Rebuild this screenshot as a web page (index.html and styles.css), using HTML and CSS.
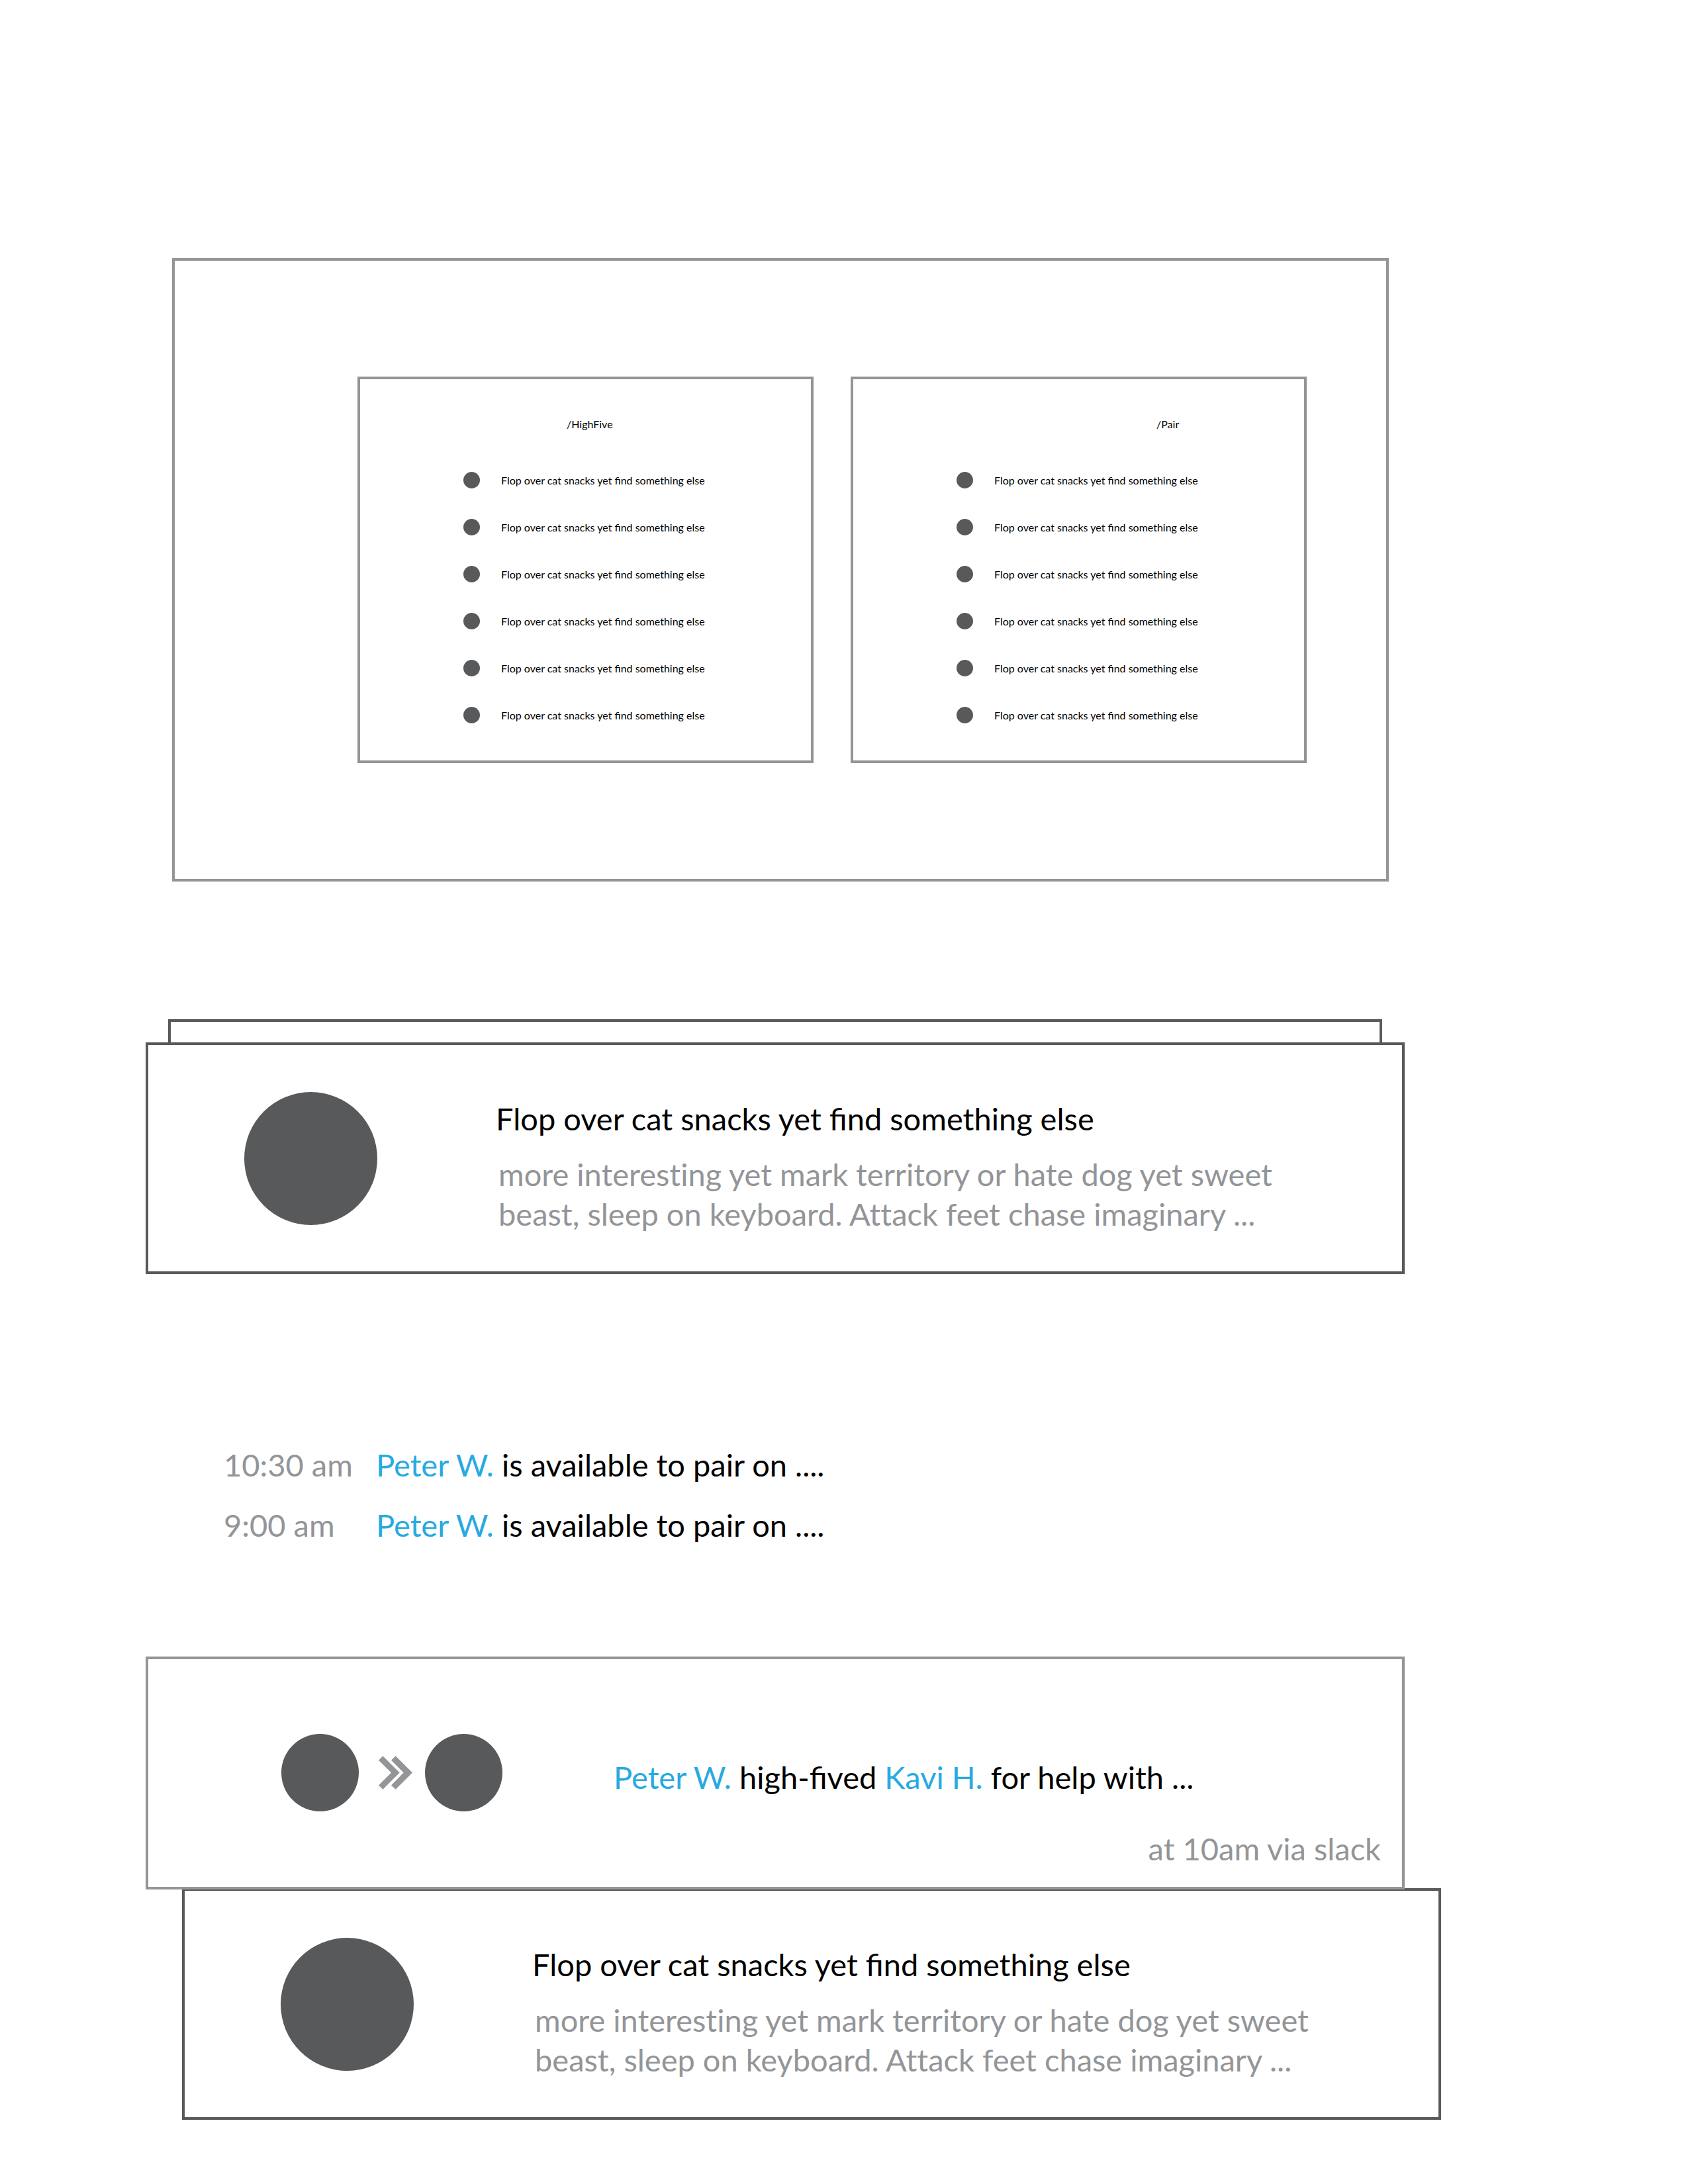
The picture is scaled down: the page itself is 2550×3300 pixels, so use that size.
FILE: index.html
```html
<!DOCTYPE html>
<html lang="en">
<head>
<meta charset="utf-8">
<title>Team activity</title>
<link rel="stylesheet" href="styles.css">
</head>
<body>
<main class="page">
  <section class="overview">
    <article class="panel">
      <h2 class="panel-title">/HighFive</h2>
      <ul class="panel-list">
        <li><span class="dot"></span>Flop over cat snacks yet find something else</li>
        <li><span class="dot"></span>Flop over cat snacks yet find something else</li>
        <li><span class="dot"></span>Flop over cat snacks yet find something else</li>
        <li><span class="dot"></span>Flop over cat snacks yet find something else</li>
        <li><span class="dot"></span>Flop over cat snacks yet find something else</li>
        <li><span class="dot"></span>Flop over cat snacks yet find something else</li>
      </ul>
    </article>
    <article class="panel">
      <h2 class="panel-title panel-title-pair">/Pair</h2>
      <ul class="panel-list">
        <li><span class="dot"></span>Flop over cat snacks yet find something else</li>
        <li><span class="dot"></span>Flop over cat snacks yet find something else</li>
        <li><span class="dot"></span>Flop over cat snacks yet find something else</li>
        <li><span class="dot"></span>Flop over cat snacks yet find something else</li>
        <li><span class="dot"></span>Flop over cat snacks yet find something else</li>
        <li><span class="dot"></span>Flop over cat snacks yet find something else</li>
      </ul>
    </article>
  </section>

  <section class="stack">
    <div class="stack-edge"></div>
    <article class="card">
      <span class="avatar"></span>
      <div class="card-text">
        <h2 class="card-title">Flop over cat snacks yet find something else</h2>
        <p class="card-excerpt">more interesting yet mark territory or hate dog yet sweet beast, sleep on keyboard. Attack feet chase imaginary ...</p>
      </div>
    </article>
  </section>

  <ul class="feed">
    <li><time class="muted">10:30 am</time><span><a href="#peter">Peter W.</a> is available to pair on ....</span></li>
    <li><time class="muted">9:00 am</time><span><a href="#peter">Peter W.</a> is available to pair on ....</span></li>
  </ul>

  <article class="highfive">
    <div class="highfive-row">
      <span class="avatar avatar-small"></span>
      <svg class="chevrons" viewBox="95 100 153 152" aria-hidden="true">
        <polygon points="114,100 190,176 114,252 95,233 152,176 95,120"/>
        <polygon points="172,100 248,176 172,252 152,233 208,176 152,120"/>
      </svg>
      <span class="avatar avatar-small"></span>
      <p class="highfive-text"><a href="#peter">Peter W.</a> high-fived <a href="#kavi">Kavi H.</a> for help with ...</p>
    </div>
    <p class="highfive-meta muted">at 10am via slack</p>
  </article>

  <article class="card card-offset">
    <span class="avatar"></span>
    <div class="card-text">
      <h2 class="card-title">Flop over cat snacks yet find something else</h2>
      <p class="card-excerpt">more interesting yet mark territory or hate dog yet sweet beast, sleep on keyboard. Attack feet chase imaginary ...</p>
    </div>
  </article>
</main>
</body>
</html>
```
FILE: styles.css
```css
* { box-sizing: border-box; }

body {
  margin: 0;
  background: #fff;
  color: #000;
  font-family: Lato, "Open Sans", sans-serif;
  font-size: 47px;
  line-height: 60px;
}

h2, p, ul { margin: 0; padding: 0; font-size: inherit; font-weight: 400; }
ul { list-style: none; }
a { color: #27aae1; text-decoration: none; }
.muted { color: #939598; }

.page { padding: 390px 0 96px; }

/* Overview with two command panels */
.overview {
  display: grid;
  grid-template-columns: 1fr 1fr;
  gap: 56px;
  margin: 0 452px 0 260px;
  padding: 175px 120px 175px 276px;
  border: 4px solid #939598;
}
.panel {
  padding: 58px 0 56px 156px;
  border: 4px solid #939598;
  font-size: 16px;
  line-height: 20px;
}
.panel-title { margin-bottom: 62px; padding-left: 156px; }
.panel-title-pair { padding-left: 302px; }
.panel-list { display: grid; gap: 46px; }
.panel-list li { display: flex; align-items: center; gap: 32px; height: 25px; }
.dot { flex: none; width: 25px; height: 25px; border-radius: 50%; background: #58595b; }

/* Message cards */
.stack { margin: 208px 428px 0 220px; }
.stack-edge {
  height: 35px;
  margin: 0 34px;
  border: 4px solid #58595b;
  border-bottom: 0;
}
.card {
  display: flex;
  align-items: flex-start;
  gap: 179px;
  padding: 71px 120px 57px 145px;
  border: 4px solid #58595b;
}
.avatar { flex: none; width: 201px; height: 201px; border-radius: 50%; background: #58595b; }
.card-text { padding-top: 10px; }
.card-title { margin-bottom: 24px; }
.card-excerpt { padding-left: 4px; color: #939598; font-variant-ligatures: none; }
.card-offset { margin: -2px 373px 0 275px; }

/* Availability feed */
.feed { display: grid; gap: 31px; margin: 258px 428px 169px 338px; }
.feed li { display: grid; grid-template-columns: 230px 1fr; }

/* High-five card */
.highfive {
  position: relative;
  z-index: 1;
  margin: 0 428px 0 220px;
  padding: 113px 32px 28px 201px;
  border: 4px solid #939598;
}
.highfive-row { display: flex; align-items: center; }
.avatar-small { width: 117px; height: 117px; }
.chevrons { flex: none; width: 51px; height: 51px; margin: 0 19px 0 30px; fill: #939598; }
.highfive-text { padding: 12px 0 0 168px; }
.highfive-meta { margin-top: 26px; text-align: right; }
```
